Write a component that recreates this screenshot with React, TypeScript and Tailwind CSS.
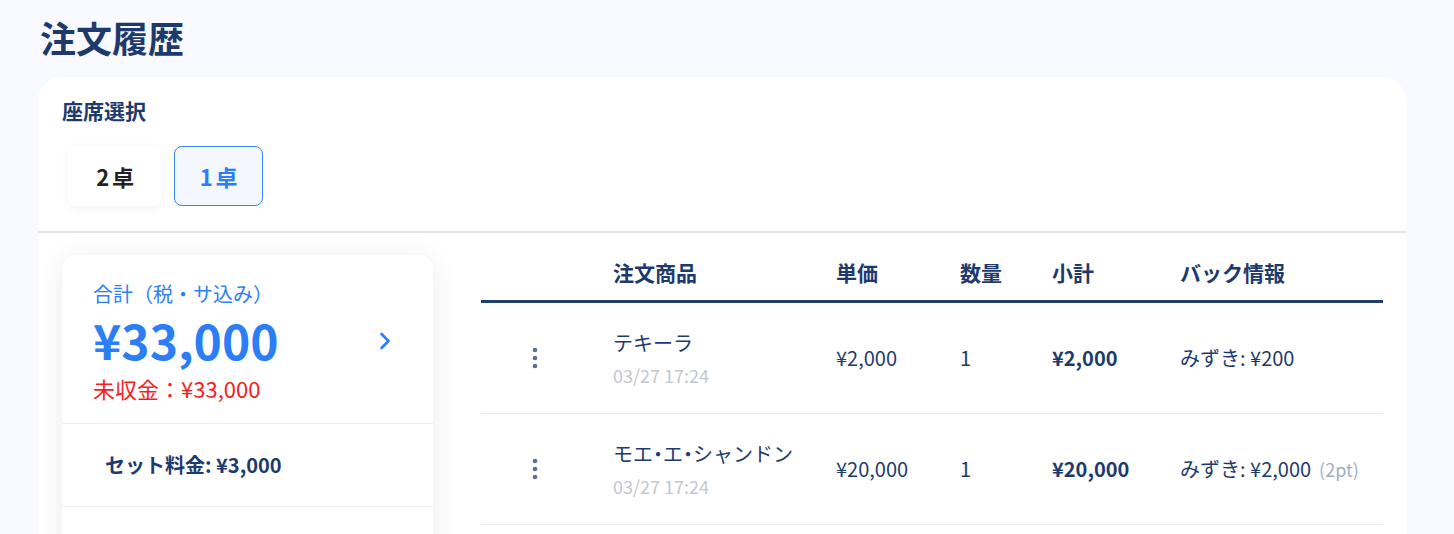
import React from 'react';

type Row = { name: string; time: string; price: string; qty: number; subtotal: string; back: string; pt?: string };

const ROWS: Row[] = [
  { name: 'テキーラ', time: '03/27 17:24', price: '¥2,000', qty: 1, subtotal: '¥2,000', back: 'みずき: ¥200' },
  { name: 'モエ・エ・シャンドン', time: '03/27 17:24', price: '¥20,000', qty: 1, subtotal: '¥20,000', back: 'みずき: ¥2,000', pt: '(2pt)' },
];

const Dots = () => (
  <svg width="6" height="22" viewBox="0 0 6 22" className="ml-[51px]">
    <circle cx="3" cy="3" r="2.3" fill="#5b6e93" />
    <circle cx="3" cy="11" r="2.3" fill="#5b6e93" />
    <circle cx="3" cy="19" r="2.3" fill="#5b6e93" />
  </svg>
);

const Chevron = () => (
  <svg width="12" height="18" viewBox="0 0 12 18" fill="none">
    <polyline points="2.5,2 9.5,9 2.5,16" stroke="#2b7ef6" strokeWidth="2.6" strokeLinecap="round" strokeLinejoin="round" />
  </svg>
);

const App: React.FC = () => {
  return (
    <div className="h-[534px] overflow-hidden bg-[#f8faff] font-['Noto_Sans_CJK_JP','Noto_Sans',sans-serif] text-[#1e3a6d]">
      <div className="pl-[38px] pr-[48px] pt-[10px]">
        <h1 className="pl-[2px] text-[36px] font-bold leading-[54px]">注文履歴</h1>

        <div className="mt-[13px] bg-white rounded-t-[24px] min-h-[500px]">
          {/* seat select */}
          <div className="pt-[18px] pl-[24px]">
            <div className="text-[21px] font-bold leading-[30px]">座席選択</div>
            <div className="flex gap-[12px] pl-[6px] mt-[21px]">
              <button className="w-[94px] h-[60px] rounded-[8px] bg-white shadow-[0_2px_10px_rgba(0,0,0,0.06)] text-[22px] font-bold text-[#222] tracking-[0.12em] pl-[3px]">2卓</button>
              <button className="w-[89px] h-[60px] rounded-[8px] border-[1.5px] border-[#3b87f7] bg-[#f4f7fd] text-[22px] font-bold text-[#2b7ef6] tracking-[0.12em] pl-[3px]">1卓</button>
            </div>
          </div>
          <div className="mt-[25px] h-[2px] bg-[#e6e6e6]" />

          <div className="flex pl-[24px] pr-[23px]">
            {/* summary */}
            <div className="w-[371px] shrink-0 mt-[22px] bg-white rounded-[14px] shadow-[0_4px_28px_rgba(0,0,0,0.08)]">
              <div className="flex items-center justify-between pl-[31px] pr-[42px] pt-[24px] pb-[20px]">
                <div>
                  <div className="text-[20px] leading-[30px] text-[#2b7ef6]">合計（税・サ込み）</div>
                  <div className="mt-[2px] text-[48px] font-bold leading-[56px] text-[#2b7ef6]">¥33,000</div>
                  <div className="mt-[6px] text-[22px] leading-[30px] text-[#f31e1e]">未収金：¥33,000</div>
                </div>
                <Chevron />
              </div>
              <div className="h-px bg-[#efefef]" />
              <div className="h-[82px] flex items-center pl-[43px] text-[20px] font-bold">セット料金: ¥3,000</div>
              <div className="h-px bg-[#efefef]" />
              <div className="h-[82px]" />
            </div>

            {/* table */}
            <div className="flex-1 ml-[48px] mt-[12px]">
              <div className="grid grid-cols-[132px_223px_124px_92px_128px_1fr] h-[58px] items-center border-b-[3px] border-[#1f3d70] text-[21px] font-bold">
                <div />
                <div>注文商品</div>
                <div>単価</div>
                <div>数量</div>
                <div>小計</div>
                <div>バック情報</div>
              </div>
              {ROWS.map((r, i) => (
                <div key={i} className="grid grid-cols-[132px_223px_124px_92px_128px_1fr] h-[111px] items-center border-b border-[#ececec] text-[20px]">
                  <div><Dots /></div>
                  <div>
                    <div className="leading-[30px] whitespace-nowrap [font-feature-settings:'halt']">{r.name}</div>
                    <div className="mt-[4px] leading-[26px] text-[18px] text-[#c3c7cf]">{r.time}</div>
                  </div>
                  <div>{r.price}</div>
                  <div>{r.qty}</div>
                  <div className="font-bold">{r.subtotal}</div>
                  <div className="whitespace-nowrap">
                    {r.back}
                    {r.pt && <span className="ml-[8px] text-[18px] text-[#a3adbf]">{r.pt}</span>}
                  </div>
                </div>
              ))}
            </div>
          </div>
        </div>
      </div>
    </div>
  );
};

export default App;
